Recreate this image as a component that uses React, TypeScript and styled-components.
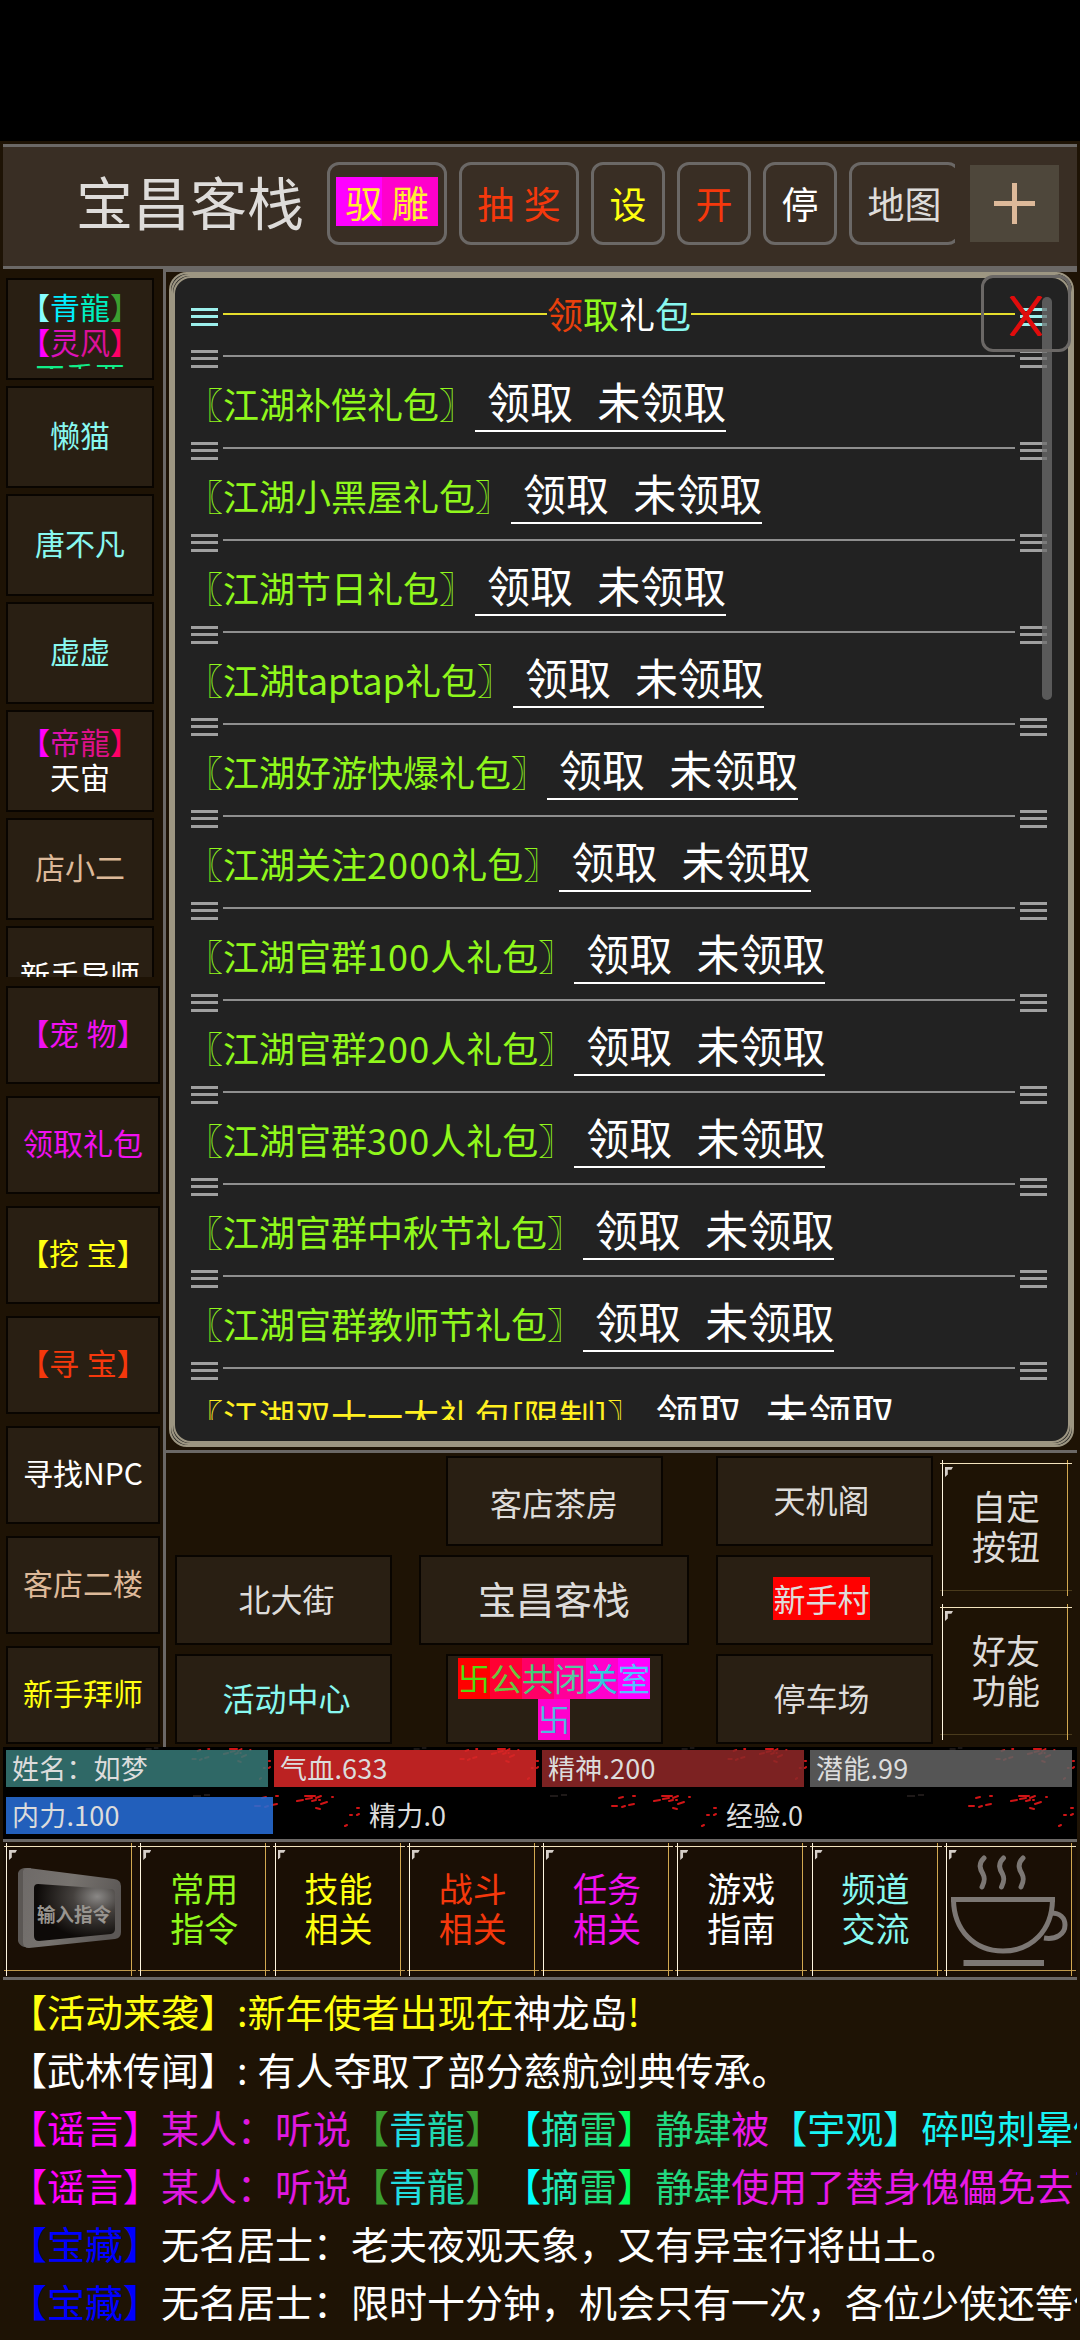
import React from "react";
import styled, { createGlobalStyle } from "styled-components";

const LINE = "#6b6866";
const FONT = '"Noto Sans CJK SC", "Noto Sans", sans-serif';

const Global = createGlobalStyle`
  *, *::before, *::after { box-sizing: border-box; }
  html, body { margin: 0; padding: 0; background: #000; }
  body { font-family: ${FONT}; color: #ddd; overflow: hidden; text-spacing-trim: space-all; }
  button { font-family: inherit; margin: 0; padding: 0; background: none; border: 0; color: inherit; flex-shrink: 0; }
`;

const Screen = styled.div`
  width: 1080px;
  height: 2340px;
  padding-top: 141px;
  background: #000;
  overflow: hidden;
`;

const Game = styled.div`
  height: 2199px;
  padding: 3px;
  background: #1e1305;
  display: flex;
  flex-direction: column;
`;

const Tint = styled.span<{ $c: string; $bg?: string }>`
  color: ${(p) => p.$c};
  background: ${(p) => p.$bg || "none"};
`;

type Run = [string, string, string?];
const Runs = ({ items }: { items: Run[] }) => (
  <>
    {items.map(([t, c, bg], i) => (
      <Tint key={i} $c={c} $bg={bg}>{t}</Tint>
    ))}
  </>
);

/* ---------- header ---------- */

const Header = styled.header`
  height: 125px;
  flex-shrink: 0;
  background: #392e24;
  border-top: 3px solid ${LINE};
  border-bottom: 3px solid ${LINE};
  display: flex;
  padding: 15px 18px 0 0;
`;

const Place = styled.h1`
  margin: -3px 0 0 73px;
  width: 251px;
  font-size: 57px;
  line-height: 83px;
  font-weight: 400;
  color: #dedcda;
  white-space: nowrap;
`;

const HeaderButtons = styled.nav`
  width: 628px;
  display: flex;
  gap: 12px;
  overflow: hidden;
`;

const HeaderButton = styled.button<{ $w: number; $c: string }>`
  width: ${(p) => p.$w}px;
  height: 83px;
  border: 3px solid ${LINE};
  border-radius: 12px;
  color: ${(p) => p.$c};
  font-size: 37px;
  line-height: 49px;
  white-space: pre;
  word-spacing: 1px;
`;

const Badge = styled.span`
  display: block;
  width: 102px;
  height: 49px;
  margin: -4px 6px 0;
  line-height: 50px;
  background: linear-gradient(90deg, #ff00ff 46px, #ff00cc 46px);
`;

const PlusButton = styled.button`
  width: 89px;
  height: 77px;
  margin: 3px 0 0 15px;
  background: #4e473b;
  display: flex;
  align-items: center;
  justify-content: center;
`;

/* ---------- middle ---------- */

const Middle = styled.div`
  display: flex;
  height: 1478px;
  flex-shrink: 0;
`;

const Sidebar = styled.aside`
  width: 160px;
  padding: 9px 0 0 3px;
  display: flex;
  flex-direction: column;
  gap: 9px;
`;

const PeopleList = styled.div`
  height: 699px;
  display: flex;
  flex-direction: column;
  gap: 6px;
  overflow: hidden;
`;

const ActionList = styled.div`
  display: flex;
  flex-direction: column;
  gap: 12px;
`;

const SideButton = styled.button<{ $w: number; $h: number; $c?: string; $top?: boolean }>`
  width: ${(p) => p.$w}px;
  height: ${(p) => p.$h}px;
  background: #291f13;
  border: 2px solid #090501;
  padding: ${(p) => (p.$top ? "10px 0 9px" : "6px 0 10px")};
  display: flex;
  flex-direction: column;
  align-items: center;
  justify-content: ${(p) => (p.$top ? "flex-start" : "center")};
  font-size: 30px;
  line-height: 35px;
  color: ${(p) => p.$c || "#fff"};
  white-space: pre;
`;

const SideText = styled.span`
  display: block;
  max-height: 81px;
  overflow: hidden;
  margin-top: -1px;
  word-spacing: 1px;
`;

const Main = styled.main`
  flex: 1;
  border-left: 3px solid ${LINE};
  border-top: 3px solid ${LINE};
  display: flex;
  flex-direction: column;
`;

const DialogArea = styled.section`
  height: 1181px;
  border-bottom: 3px solid ${LINE};
  padding: 0 3px;
  position: relative;
`;

const Frame = styled.div`
  border: 2px solid #9d9682;
  border-radius: 18px;
  background: #222;
`;

const Dialog = styled.div`
  height: 1163px;
  padding: 15px 11px 0 12px;
`;

const DialogScroll = styled.div`
  height: 1127px;
  width: 864px;
  overflow: hidden;
`;

const RuleRow = styled.div<{ $h: number; $c: string }>`
  height: ${(p) => p.$h}px;
  width: 864px;
  display: flex;
  align-items: center;
  color: ${(p) => p.$c};
`;

const TitleRow = styled(RuleRow)`
  margin-bottom: 11px;
`;

const Bars = styled.i<{ $side: "l" | "r" }>`
  display: flex;
  flex-direction: column;
  justify-content: space-between;
  width: 27px;
  height: 18px;
  margin: ${(p) => (p.$side === "l" ? "3px 5px 0 4px" : "3px 4px 0 5px")};
  flex-shrink: 0;
  &::before, &::after { content: ""; }
  &::before, &::after, & > b { height: 3px; background: currentColor; }
`;

const Rule = styled.i<{ $c: string }>`
  flex: 1;
  height: 2px;
  background: ${(p) => p.$c};
  margin-top: -2px;
`;

const DialogTitle = styled.h2`
  margin: -4px 0 0;
  font-size: 36px;
  line-height: 44px;
  font-weight: 400;
`;

const GiftRow = styled.div<{ $c: string }>`
  height: 74px;
  display: flex;
  align-items: baseline;
  padding-top: 9px;
  font-size: 36px;
  line-height: 52px;
  color: ${(p) => p.$c};
  white-space: pre;
`;

const Digits = styled.span`
  letter-spacing: 1.1px;
`;

const Claim = styled.a`
  color: #fff;
  font-size: 43px;
  line-height: 50px;
  height: 57px;
  word-spacing: 2.4px;
  border-bottom: 2px solid #fff;
`;

const ScrollThumb = styled.div`
  position: absolute;
  left: 876px;
  top: 25px;
  width: 10px;
  height: 403px;
  border-radius: 5px;
  background: rgba(110, 110, 110, 0.75);
`;

const CloseButton = styled.button`
  position: absolute;
  left: 815px;
  top: 3px;
  width: 90px;
  height: 77px;
  border: 3px solid ${LINE};
  border-radius: 12px;
  padding-top: 4px;
  display: flex;
  align-items: center;
  justify-content: center;
`;

const MapArea = styled.section`
  flex: 1;
  display: flex;
  padding: 3px 0 0 9px;
`;

const MapGrid = styled.div`
  display: grid;
  grid-template-columns: 217px 270px 217px;
  grid-template-rows: repeat(3, 90px);
  column-gap: 27px;
  row-gap: 9px;
  justify-items: center;
`;

const MapButton = styled.button<{ $big?: boolean; $c?: string; $shift?: number; $low?: boolean }>`
  width: ${(p) => (p.$big ? 270 : 217)}px;
  height: 90px;
  background: #291f13;
  border: 2px solid #090501;
  font-size: ${(p) => (p.$big ? 38 : 32)}px;
  line-height: 40px;
  color: ${(p) => p.$c || "#dedcda"};
  padding: ${(p) => {
    const s = p.$shift || 0;
    return `${p.$low ? 2 : 0}px ${s < 0 ? -s : 0}px ${p.$low ? 0 : 4}px ${s > 0 ? s : 0}px`;
  }};
  overflow: hidden;
`;

const Marked = styled.span`
  display: inline-block;
  height: 43px;
  line-height: 42px;
  background: #ff0000;
`;

const HallName = styled.span`
  display: flex;
  flex-wrap: wrap;
  justify-content: center;
  width: 192px;
  margin: 2px auto 0;
  & > span { width: 32px; height: 41px; line-height: 39px; overflow: hidden; }
`;

const ToolColumn = styled.div`
  display: flex;
  flex-direction: column;
  margin-left: 6px;
  padding-top: 3px;
  gap: 6px;
`;

const FrameButton = styled.button<{ $w: number; $h: number; $c: string; $foot: string }>`
  position: relative;
  width: ${(p) => p.$w}px;
  height: ${(p) => p.$h}px;
  color: ${(p) => p.$c};
  font-size: 34px;
  line-height: 40px;
  display: flex;
  align-items: center;
  justify-content: center;
  text-align: center;
  padding-bottom: 4px;
  background:
    linear-gradient(#f3e3bd, #f3e3bd) 1px 4px / calc(100% - 2px) 1px no-repeat,
    linear-gradient(#fff6e0, #fff6e0) 3px 1px / 1px calc(100% - 2px) no-repeat,
    linear-gradient(#d2a850, #d2a850) calc(100% - 5px) 1px / 1px calc(100% - 2px) no-repeat,
    linear-gradient(${(p) => p.$foot}, ${(p) => p.$foot}) 1px calc(100% - 6px) / calc(100% - 2px) 1px no-repeat;
  &::before {
    content: "";
    position: absolute;
    left: 6px;
    top: 8px;
    width: 8px;
    height: 10px;
    background: #d5cec8;
    clip-path: polygon(0 0, 100% 0, 80% 28%, 35% 28%, 35% 75%, 0 100%);
  }
`;

/* ---------- status ---------- */

const Status = styled.section`
  height: 92px;
  flex-shrink: 0;
  background: #000;
  display: flex;
  flex-direction: column;
  gap: 2px;
`;

const StatusRow = styled.div`
  display: flex;
`;

const StatusCell = styled.div<{ $w: number }>`
  position: relative;
  width: ${(p) => p.$w}px;
  height: 45px;
  padding: 3px;
`;

const StatusBar = styled.div<{ $w: number; $bg: string }>`
  position: relative;
  width: ${(p) => p.$w}px;
  height: 37px;
  padding-left: 6px;
  font-size: 27px;
  line-height: 35px;
  letter-spacing: 0.2px;
  color: #dcdcdc;
  background: ${(p) => p.$bg};
  white-space: nowrap;
`;

const Blood = styled.svg`
  position: absolute;
  left: 0;
  top: 0;
  width: 100%;
  height: 45px;
`;

/* ---------- bottom ---------- */

const CommandBar = styled.nav`
  height: 141px;
  flex-shrink: 0;
  border-top: 3px solid ${LINE};
  border-bottom: 3px solid ${LINE};
  background: #1a0f05;
  display: grid;
  grid-template-columns: repeat(8, 134.25px);
`;

const Icon = styled.svg`
  position: absolute;
  left: 0;
  top: 0;
  width: 134px;
  height: 135px;
`;

const Messages = styled.section`
  padding: 2px 0 0 6px;
  overflow: hidden;
  flex: 1;
`;

const Message = styled.p`
  margin: 0;
  font-size: 38px;
  line-height: 58px;
  height: 58px;
  white-space: pre;
  word-spacing: 1.5px;
`;

const C = { m: "#f010f0", y: "#ffff10", o: "#f5380c", w: "#fff", g: "#90f81c", a: "#88f8f0", t: "#ddb999" };

const people: { runs?: Run[][]; text?: string; c?: string; top?: boolean }[] = [
  {
    top: true,
    runs: [
      [["【", "#88ffff"], ["青", "#00eeff"], ["龍", "#00eec0"], ["】", "#3b9f30"]],
      [["【", "#ff00ff"], ["灵", "#dd11bb"], ["风", "#dd1199"], ["】", "#ff0066"]],
      [["不重要", "#11ee88"]],
    ],
  },
  { text: "懒猫", c: C.a },
  { text: "唐不凡", c: C.a },
  { text: "虚虚", c: C.a },
  {
    runs: [
      [["【", "#ff00ff"], ["帝", "#dd11aa"], ["龍", "#dd1188"], ["】", "#ff0066"]],
      [["天宙", "#fff"]],
    ],
  },
  { text: "店小二", c: C.t },
  { text: "新手导师", c: C.w },
];

const actions: [string, string][] = [
  ["【宠 物】", C.m],
  ["领取礼包", C.m],
  ["【挖 宝】", C.y],
  ["【寻 宝】", C.o],
  ["寻找NPC", C.w],
  ["客店二楼", C.t],
  ["新手拜师", C.y],
];

const gifts = [
  "江湖补偿礼包",
  "江湖小黑屋礼包",
  "江湖节日礼包",
  "江湖taptap礼包",
  "江湖好游快爆礼包",
  "江湖关注2000礼包",
  "江湖官群100人礼包",
  "江湖官群200人礼包",
  "江湖官群300人礼包",
  "江湖官群中秋节礼包",
  "江湖官群教师节礼包",
  "江湖双十一大礼包[限制]",
];

const hall: Run[] = [
  ["卐", "#4fdc10", "#ff0000"],
  ["公", "#66c840", "#ff0033"],
  ["共", "#44cc77", "#ff0066"],
  ["闭", "#55c8a0", "#ff0099"],
  ["关", "#33c8dd", "#ff00cc"],
  ["室", "#55c0ff", "#ff00ff"],
  ["卐", "#50b8e0", "#ff00cc"],
];

const commands: [string, string, string][] = [
  ["常用", "指令", C.g],
  ["技能", "相关", C.y],
  ["战斗", "相关", C.o],
  ["任务", "相关", C.m],
  ["游戏", "指南", C.w],
  ["频道", "交流", C.a],
];

const rumour: Run[] = [
  ["【谣言】", "#ff00ff"],
  ["某人：听说", "#e018e0"],
  ["【", "#3b9f30"],
  ["青", "#22dde0"],
  ["龍", "#20d8b0"],
  ["】", "#3b9f30"],
  ["【", "#00ffff"],
  ["摘", "#22e8b8"],
  ["雷", "#22dd80"],
  ["】", "#00ff60"],
  ["静肆", "#22d880"],
];

const messages: Run[][] = [
  [["【活动来袭】:新年使者出现在", "#ffff10"], ["神龙岛", "#fff"], ["!", "#ffff10"]],
  [["【武林传闻】: 有人夺取了部分慈航剑典传承。", "#fff"]],
  [...rumour, ["被", "#e818e8"], ["【宇观】碎鸣刺晕倒", "#18f4f4"]],
  [...rumour, ["使用了替身傀儡免去了", "#e818e8"]],
  [["【宝藏】", "#0000ff"], ["无名居士：老夫夜观天象，又有异宝行将出土。", "#fff"]],
  [["【宝藏】", "#0000ff"], ["无名居士：限时十分钟，机会只有一次，各位少侠还等什", "#fff"]],
];

const Splatter = () => (
  <Blood viewBox="0 0 357 45" preserveAspectRatio="none">
    <g stroke="#d01416" strokeWidth="2" strokeLinecap="round" fill="none">
      <path d="M294 7l6-1M303 5l6-1M302 2h10M313 4l5-2M309 7l4-1M316 6h1M329 3h1M318 10l6-2M313 14l4 1" />
      <path d="M252 12h5M262 13l3-1M269 11l5-1M259 4l4-1M273 2h2" />
      <path d="M342 32l2-1M347 21h2M354 21l2-1M354 14h2" />
    </g>
    <path d="M190 2h8M201 1h6" stroke="#3c3230" />
  </Blood>
);

const Cup = () => (
  <Icon viewBox="0 0 134 135" fill="none" stroke="#7c7774" strokeWidth="5">
    <path strokeLinecap="round" d="M41 16c-6 6-4 11-1 16 2 4 2 7-1 13M60.500 16c-6 6-4 11-1 16 2 4 2 7-1 13M80 16c-6 6-4 11-1 16 2 4 2 7-1 13" />
    <path d="M8 57.500H112M10.500 58C11 88 31 109 60 109S109 88 109.500 58" />
    <path d="M108 71c9 0 14 5 14 12 0 9-9 15-21 13" />
    <path d="M20.500 121H101" strokeWidth="6" />
  </Icon>
);

const Terminal = () => (
  <Icon viewBox="0 0 134 135">
    <defs>
      <linearGradient id="case" x1="0" y1="0" x2="1" y2="0.3">
        <stop offset="0" stopColor="#6e6a68" />
        <stop offset="0.5" stopColor="#77736f" />
        <stop offset="1" stopColor="#5c5856" />
      </linearGradient>
      <radialGradient id="glass" cx="0.78" cy="0.22" r="0.75">
        <stop offset="0" stopColor="#8a8886" />
        <stop offset="0.4" stopColor="#44403d" />
        <stop offset="1" stopColor="#0d0a08" />
      </radialGradient>
    </defs>
    <path d="M15 31q1-4 6-5l7 0v79h-7q-5-2-6-6z" fill="#5b5754" />
    <path d="M20 29q1-3 5-3l86 11q7 1 7 7v46q0 6-6 7l-86 9q-6 0-6-6z" fill="url(#case)" />
    <path d="M31 46q0-4 4-4l73 5q4 0 4 5v35q0 4-4 5l-72 7q-5 0-5-5z" fill="url(#glass)" />
    <text x="34" y="80" fontSize="19" fontWeight="700" textLength="74" lengthAdjust="spacingAndGlyphs" fill="#98948f">输入指令</text>
  </Icon>
);

const Divider = () => (
  <RuleRow $h={18} $c="#a0a0a0">
    <Bars $side="l"><b /></Bars>
    <Rule $c="#8f8f8f" />
    <Bars $side="r"><b /></Bars>
  </RuleRow>
);

const GiftName = ({ name }: { name: string }) => (
  <span>
    〖
    {name.split(/(\d+)/).map((part, i) => (i % 2 ? <Digits key={i}>{part}</Digits> : part))}
    〗
  </span>
);

export default function App() {
  return (
    <Screen>
      <Global />
      <Game>
        <Header>
          <Place>宝昌客栈</Place>
          <HeaderButtons>
            <HeaderButton $w={120} $c="#ffee33"><Badge>驭 雕</Badge></HeaderButton>
            <HeaderButton $w={120} $c={C.o}>抽 奖</HeaderButton>
            <HeaderButton $w={74} $c={C.y}>设</HeaderButton>
            <HeaderButton $w={74} $c={C.o}>开</HeaderButton>
            <HeaderButton $w={74} $c="#fff">停</HeaderButton>
            <HeaderButton $w={111} $c="#dedcda">地图</HeaderButton>
          </HeaderButtons>
          <PlusButton>
            <svg width="41" height="41" viewBox="0 0 41 41" stroke="#ddb999" strokeWidth="5">
              <path d="M0 20.500H41M20.500 0V41" />
            </svg>
          </PlusButton>
        </Header>

        <Middle>
          <Sidebar>
            <PeopleList>
              {people.map((p, i) => (
                <SideButton key={i} $w={148} $h={102} $c={p.c} $top={p.top}>
                  <SideText>
                    {p.text}
                    {p.runs?.map((r, j) => (
                      <div key={j}><Runs items={r} /></div>
                    ))}
                  </SideText>
                </SideButton>
              ))}
            </PeopleList>
            <ActionList>
              {actions.map(([t, c]) => (
                <SideButton key={t} $w={154} $h={98} $c={c}><SideText>{t}</SideText></SideButton>
              ))}
            </ActionList>
          </Sidebar>

          <Main>
            <DialogArea>
              <Frame><Frame><Frame>
                <Dialog>
                  <DialogScroll>
                    <TitleRow $h={44} $c="#9cefec">
                      <Bars $side="l"><b /></Bars>
                      <Rule $c="#e6de2c" />
                      <DialogTitle>
                        <Runs items={[["领", "#e8400c"], ["取", C.g], ["礼", "#fff"], ["包", C.a]]} />
                      </DialogTitle>
                      <Rule $c="#e6de2c" />
                      <Bars $side="r"><b /></Bars>
                    </TitleRow>
                    {gifts.map((g, i) => (
                      <React.Fragment key={g}>
                        <Divider />
                        <GiftRow $c={i === 11 ? "#fff020" : C.g}>
                          <GiftName name={g} />
                          <Claim> 领取  未领取</Claim>
                        </GiftRow>
                      </React.Fragment>
                    ))}
                  </DialogScroll>
                </Dialog>
              </Frame></Frame></Frame>
              <ScrollThumb />
              <CloseButton>
                <svg width="34" height="40" viewBox="0 0 34 40" stroke="#e00c0c" strokeWidth="4.500">
                  <path d="M2.500 0L31.500 40M31.500 0L2.500 40" />
                </svg>
              </CloseButton>
            </DialogArea>

            <MapArea>
              <MapGrid>
                <span />
                <MapButton $low>客店茶房</MapButton>
                <MapButton $shift={-6}>天机阁</MapButton>
                <MapButton $shift={6}>北大街</MapButton>
                <MapButton $big>宝昌客栈</MapButton>
                <MapButton $shift={-6}><Marked>新手村</Marked></MapButton>
                <MapButton $shift={6} $c={C.a}>活动中心</MapButton>
                <MapButton><HallName><Runs items={hall} /></HallName></MapButton>
                <MapButton $shift={-6}>停车场</MapButton>
              </MapGrid>
              <ToolColumn>
                <FrameButton $w={134} $h={138} $c="#dedcda" $foot="#4a3b1c">自定<br />按钮</FrameButton>
                <FrameButton $w={134} $h={138} $c="#dedcda" $foot="#4a3b1c">好友<br />功能</FrameButton>
              </ToolColumn>
            </MapArea>
          </Main>
        </Middle>

        <Status>
          <StatusRow>
            {[["姓名：如梦", "#357674e0"], ["气血.633", "#d52727e0"], ["精神.200", "#8d2727e0"], ["潜能.99", "#616161e0"]].map(([t, bg]) => (
              <StatusCell key={t} $w={268}><Splatter /><StatusBar $w={262} $bg={bg}>{t}</StatusBar></StatusCell>
            ))}
          </StatusRow>
          <StatusRow>
            {[["内力.100", "#276cd5e0"], ["精力.0", "transparent"], ["经验.0", "transparent"]].map(([t, bg]) => (
              <StatusCell key={t} $w={357}><Splatter /><StatusBar $w={267} $bg={bg}>{t}</StatusBar></StatusCell>
            ))}
          </StatusRow>
        </Status>

        <CommandBar>
          <FrameButton $w={134} $h={135} $c="#fff" $foot="#c09a4c"><Terminal /></FrameButton>
          {commands.map(([a, b, c]) => (
            <FrameButton key={a} $w={134} $h={135} $c={c} $foot="#c09a4c">{a}<br />{b}</FrameButton>
          ))}
          <FrameButton $w={134} $h={135} $c="#fff" $foot="#c09a4c"><Cup /></FrameButton>
        </CommandBar>

        <Messages>
          {messages.map((m, i) => (
            <Message key={i}><Runs items={m} /></Message>
          ))}
        </Messages>
      </Game>
    </Screen>
  );
}
